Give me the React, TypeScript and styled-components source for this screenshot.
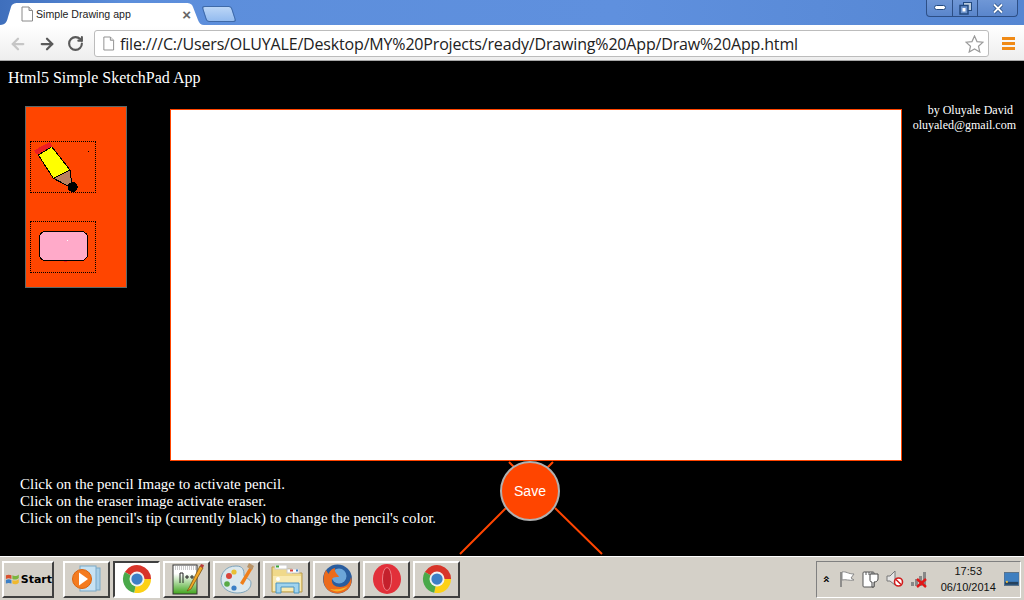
import React from "react";
import styled, { createGlobalStyle } from "styled-components";
import { ArrowLeft, ArrowRight, RotateCw } from "lucide-react";

const GlobalStyle = createGlobalStyle`
  html, body {
    margin: 0;
    padding: 0;
    background: #000;
  }
`;

const ChromeIcon = () => (
  <svg width="30" height="30" viewBox="0 0 32 32">
    <path d="M16 16L3 8.5A15 15 0 0 1 31 16Z" fill="#d8352a" />
    <path d="M16 16L31 16A15 15 0 0 1 13 30.7Z" fill="#fcd116" />
    <path d="M16 16L13 30.7A15 15 0 0 1 3 8.5Z" fill="#4aa94a" />
    <circle cx="16" cy="16" r="8" fill="#f2f2f2" />
    <circle cx="16" cy="16" r="6" fill="#3d7fc6" />
  </svg>
);

const PlayerIcon = () => (
  <svg width="32" height="30" viewBox="0 0 32 30">
    <rect x="14" y="4" width="15" height="22" fill="#a9cfe8" stroke="#7ba9c8" />
    <rect x="9" y="2" width="16" height="25" fill="#c7e2f3" stroke="#7ba9c8" />
    <circle cx="11" cy="15" r="9.5" fill="#f47b20" stroke="#d9640f" />
    <path d="M8 8.5L17 15L8 21.5Z" fill="#fff" />
  </svg>
);

const NotepadIcon = () => (
  <svg width="34" height="34" viewBox="0 0 34 34">
    <defs>
      <linearGradient id="padFill" x1="0" y1="0" x2="0" y2="1">
        <stop offset="0.3" stopColor="#fff" />
        <stop offset="1" stopColor="#3fa51c" />
      </linearGradient>
    </defs>
    <rect x="3" y="3" width="24" height="29" fill="url(#padFill)" stroke="#333" />
    <path d="M3 5H27M3 7H27" stroke="#999" strokeDasharray="1 1" />
    <path d="M10 21V11H13V21M15 15H19M17 13V17M20 15H24M22 13V17" fill="none" stroke="#222" />
    <path d="M30 4L19 26L17 29L21 27L33 6Z" fill="#f3a827" stroke="#7a5312" strokeWidth="0.8" />
    <path d="M30 4L33 6L34 3L31 2Z" fill="#b83a3a" />
  </svg>
);

const PaletteIcon = () => (
  <svg width="34" height="34" viewBox="0 0 34 34">
    <path d="M16 4C6 4 1 11 1 18C1 26 9 31 17 31C26 31 31 27 31 21C31 16 24 17 24 13C24 8 23 4 16 4Z" fill="#dbe8ee" stroke="#7ea4bb" />
    <circle cx="9" cy="14" r="3" fill="#d9453b" />
    <circle cx="7" cy="22" r="2.8" fill="#58a945" />
    <circle cx="14" cy="10" r="2.6" fill="#e9bf35" />
    <circle cx="14" cy="26" r="2.6" fill="#3b7fc6" />
    <path d="M31 3L20 21L23 23L33 6Z" fill="#ef7f1a" />
    <path d="M29 1L34 4L32 8L27 5Z" fill="#b99468" />
  </svg>
);

const FolderIcon = () => (
  <svg width="34" height="32" viewBox="0 0 34 32">
    <path d="M2 4H15L17 6H22V10H32V29H2Z" fill="#f0d98a" stroke="#b89a4c" />
    <rect x="5" y="2" width="12" height="4" fill="#fff" stroke="#ccc" />
    <rect x="6" y="2.5" width="3" height="2" fill="#3aa53a" />
    <rect x="17" y="6" width="12" height="4" fill="#fff" stroke="#ccc" />
    <rect x="20" y="6.5" width="3" height="2" fill="#d9453b" />
    <rect x="26" y="6.5" width="2" height="2" fill="#3b7fc6" />
    <path d="M3 13H31V28H3Z" fill="#f9eab2" />
    <path d="M6 30V20H29V30H24V24H11V30Z" fill="#9fd3ee" stroke="#4b93c0" />
    <circle cx="8" cy="16" r="2" fill="#fff" />
  </svg>
);

const FirefoxIcon = () => (
  <svg width="32" height="32" viewBox="0 0 32 32">
    <circle cx="16.5" cy="16" r="14.5" fill="#2a5d9e" />
    <circle cx="18" cy="13" r="7.5" fill="#6ca6d8" />
    <path d="M5 7C2 12 1 20 6 26C11 32 23 32 28 25C31 21 31 16 30 14C29 21 24 24 19 24C14 24 10 21 11 16C12 14 15 14 18 14C17 11 13 10 14 5C10 6 8 9 8 11C7 10 6 9 5 7Z" fill="#ec6b1c" />
    <path d="M9 26C14 30 23 29 27 23C23 26 14 27 9 26Z" fill="#f7b32b" />
  </svg>
);

const OperaIcon = () => (
  <svg width="30" height="32" viewBox="0 0 30 32">
    <ellipse cx="15" cy="16" rx="14" ry="15" fill="#e2303a" />
    <ellipse cx="15" cy="16" rx="4.5" ry="11.5" fill="#c4202c" stroke="#ee7f86" />
  </svg>
);

const WindowsFlag = () => (
  <svg width="17" height="16" viewBox="0 0 16 16">
    <path d="M1 4C3 3 5 3 7 4V8C5 7 3 7 1 8Z" fill="#d9502e" />
    <path d="M8 4C10 5 13 5 15 3V7C13 9 10 9 8 8Z" fill="#7bb63f" />
    <path d="M1 9C3 8 5 8 7 9V13C5 12 3 12 1 13Z" fill="#3b7fc6" />
    <path d="M8 9C10 10 13 10 15 8V12C13 14 10 14 8 13Z" fill="#f0b92d" />
  </svg>
);

const DocIcon = ({ size }: { size: number }) => (
  <svg width={size} height={size + 2} viewBox="0 0 14 16">
    <path d="M2 1H9L12.5 4.5V15H2Z" fill="#fff" stroke="#8a8a8a" />
    <path d="M9 1V4.5H12.5" fill="#e4e4e4" stroke="#8a8a8a" />
  </svg>
);

const StarIcon = () => (
  <svg width="19" height="18" viewBox="0 0 19 18">
    <path d="M9.5 1L12 6.6L18 7.2L13.5 11.2L14.8 17L9.5 14L4.2 17L5.5 11.2L1 7.2L7 6.6Z" fill="#fff" stroke="#9a9a9a" strokeWidth="1.2" />
  </svg>
);

const PencilTool = () => (
  <svg width="66" height="52" viewBox="0 0 66 52" shapeRendering="crispEdges">
    <path d="M8.3 14L21.7 5.7L40 29L23.3 37.3Z" fill="#ffff00" stroke="#000" />
    <path d="M23.3 37.3L40 29L41.7 42.3L38 45Z" fill="#b9815f" stroke="#000" />
    <path d="M5.5 11.5L21 3" stroke="#ed1c24" strokeWidth="5" />
    <circle cx="42.7" cy="46" r="5" fill="#000" />
    <rect x="58" y="10" width="1" height="1" fill="#000" />
  </svg>
);

const EraserTool = () => (
  <svg width="66" height="52" viewBox="0 0 66 52" shapeRendering="crispEdges">
    <rect x="34" y="39" width="3" height="2" fill="#ed1c24" />
    <rect x="9.5" y="10.5" width="48" height="29" rx="6" fill="#ffaac9" stroke="#000" />
    <rect x="37" y="19" width="1" height="1" fill="#fff" />
  </svg>
);

const TrayFlag = () => (
  <svg width="18" height="18" viewBox="0 0 18 18">
    <path d="M3 2V17" stroke="#777" strokeWidth="1.5" />
    <path d="M4 2C8 1 10 4 16 4L13 8L16 10C11 11 8 9 4 10Z" fill="#fff" stroke="#888" />
  </svg>
);

const TrayPower = () => (
  <svg width="18" height="18" viewBox="0 0 18 18">
    <rect x="1" y="2" width="11" height="15" rx="1" fill="#fff" stroke="#555" />
    <path d="M4 2V5M7 2V5M10 2V5" stroke="#555" />
    <path d="M8 4H16V9C16 11 14 12 12 12V17H10V12C8 12 8 11 8 9Z" fill="#fff" stroke="#444" />
  </svg>
);

const TraySound = () => (
  <svg width="18" height="18" viewBox="0 0 18 18">
    <path d="M1 6H4L9 1V15L4 11H1Z" fill="#e6e6e6" stroke="#777" />
    <circle cx="12.5" cy="12" r="4" fill="#fff" stroke="#d01c1c" strokeWidth="1.6" />
    <path d="M10 9.5L15 14.5" stroke="#d01c1c" strokeWidth="1.6" />
  </svg>
);

const TrayNetwork = () => (
  <svg width="18" height="18" viewBox="0 0 18 18">
    <path d="M1 12H4V16H1ZM5 9H8V16H5ZM9 6H12V16H9ZM13 2H16V16H13Z" fill="#888" />
    <path d="M7 9L16 17M16 9L7 17" stroke="#e01818" strokeWidth="2.4" />
  </svg>
);

const TrayDesktop = () => (
  <svg width="16" height="14" viewBox="0 0 16 14">
    <rect x="0" y="0" width="16" height="14" fill="#3f7fc0" stroke="#596a7a" />
    <rect x="1" y="10" width="14" height="3" fill="#25415c" />
    <rect x="2" y="9" width="2" height="2" fill="#f0c040" />
  </svg>
);

const LaunchIcons = [
  { name: "player", icon: <PlayerIcon /> },
  { name: "chrome", icon: <ChromeIcon />, active: true },
  { name: "notepad", icon: <NotepadIcon /> },
  { name: "paint", icon: <PaletteIcon /> },
  { name: "explorer", icon: <FolderIcon /> },
  { name: "firefox", icon: <FirefoxIcon /> },
  { name: "opera", icon: <OperaIcon /> },
  { name: "chrome2", icon: <ChromeIcon /> },
];

const App = () => {
  return (
    <Screen>
      <GlobalStyle />
      <TabStrip>
        <Tab>
          <DocIcon size={14} />
          <TabTitle>Simple Drawing app</TabTitle>
          <TabClose>×</TabClose>
        </Tab>
        <NewTab />
        <WindowControls>
          <WindowButton>
            <svg width="12" height="6" viewBox="0 0 12 6">
              <rect x="0.5" y="0.5" width="11" height="4" rx="2" fill="#fff" stroke="#234a80" />
            </svg>
          </WindowButton>
          <WindowButton>
            <svg width="13" height="13" viewBox="0 0 13 13">
              <rect x="4.5" y="0.5" width="8" height="8" fill="#bcd" stroke="#234a80" />
              <rect x="1" y="3.5" width="8" height="8.5" fill="#6c93cc" stroke="#234a80" strokeWidth="1.5" />
              <rect x="3.5" y="6" width="3" height="3.5" fill="#fff" />
            </svg>
          </WindowButton>
          <WindowButton $wide>
            <svg width="12" height="11" viewBox="0 0 12 11">
              <path d="M2 1.5L10 9.5M10 1.5L2 9.5" stroke="#234a80" strokeWidth="3.4" />
              <path d="M2 1.5L10 9.5M10 1.5L2 9.5" stroke="#fff" strokeWidth="1.8" />
            </svg>
          </WindowButton>
        </WindowControls>
      </TabStrip>

      <Toolbar>
        <NavIcons>
          <ArrowLeft size={18} strokeWidth={3} color="#c6c6c6" />
          <ArrowRight size={18} strokeWidth={3} color="#5a5a5a" />
          <RotateCw size={17} strokeWidth={3} color="#5a5a5a" />
        </NavIcons>
        <Omnibox>
          <DocIcon size={13} />
          <Address>file:///C:/Users/OLUYALE/Desktop/MY%20Projects/ready/Drawing%20App/Draw%20App.html</Address>
          <StarIcon />
        </Omnibox>
        <MenuIcon>
          <span />
          <span />
          <span />
        </MenuIcon>
      </Toolbar>

      <Page>
        <Heading>Html5 Simple SketchPad App</Heading>
        <Workspace>
          <ToolPanel>
            <ToolBox>
              <PencilTool />
            </ToolBox>
            <ToolBox>
              <EraserTool />
            </ToolBox>
          </ToolPanel>
          <DrawingCanvas />
          <Credit>
            <CreditName>by Oluyale David</CreditName>
            <div>oluyaled@gmail.com</div>
          </Credit>
        </Workspace>
        <Footer>
          <Easel width="160" height="96" viewBox="0 0 160 96">
            <path d="M50 1L56 7M94 1L88 7M47 47L1 93M96 47L143 93" stroke="#ff4500" strokeWidth="2" fill="none" />
          </Easel>
          <Instructions>
            <div>Click on the pencil Image to activate pencil.</div>
            <div>Click on the eraser image activate eraser.</div>
            <div>Click on the pencil's tip (currently black) to change the pencil's color.</div>
          </Instructions>
          <SaveButton>Save</SaveButton>
        </Footer>
      </Page>

      <Taskbar>
        <StartButton>
          <WindowsFlag />
          Start
        </StartButton>
        <Launchers>
          {LaunchIcons.map((item) => (
            <TaskButton key={item.name} $active={item.active}>
              {item.icon}
            </TaskButton>
          ))}
        </Launchers>
        <Tray>
          <TrayChevron>»</TrayChevron>
          <TrayIcons>
            <TrayFlag />
            <TrayPower />
            <TraySound />
            <TrayNetwork />
          </TrayIcons>
          <Clock>
            <div>17:53</div>
            <div>06/10/2014</div>
          </Clock>
          <TrayDesktop />
        </Tray>
      </Taskbar>
    </Screen>
  );
};

const Screen = styled.div`
  width: 1024px;
  height: 600px;
  display: flex;
  flex-direction: column;
  overflow: hidden;
  background: #000;
`;

const TabStrip = styled.div`
  height: 25px;
  flex: none;
  display: flex;
  align-items: flex-end;
  padding-left: 0;
  background: linear-gradient(90deg, #3f6fbc 0%, #5c8edb 12%, #5f90de 60%, #5586d2 100%);
`;

const Tab = styled.div`
  width: 204px;
  height: 22px;
  box-sizing: border-box;
  display: flex;
  align-items: center;
  padding: 0 13px 0 20px;
  background: #fff;
  clip-path: path("M0 22C6 22 7 18 8 14L11 4C12 1 14 0 18 0L186 0C190 0 192 1 193 4L198 17C199 20 201 22 204 22Z");
`;

const TabTitle = styled.span`
  flex: 1;
  margin-left: 2px;
  font: 10.6px "Liberation Sans", Arial, sans-serif;
  color: #222;
`;

const TabClose = styled.span`
  font: bold 15px "Liberation Sans", Arial, sans-serif;
  color: #666;
`;

const NewTab = styled.div`
  width: 30px;
  height: 16px;
  margin: 0 0 3px 0;
  background: linear-gradient(#bcd6f6, #93bbef);
  border: 1px solid #3f6aa8;
  box-sizing: border-box;
  border-radius: 3px;
  transform: skewX(18deg);
`;

const WindowControls = styled.div`
  margin-left: auto;
  margin-right: 6px;
  align-self: flex-start;
  display: flex;
  height: 17px;
  box-sizing: border-box;
  border: 1px solid #2d4f86;
  border-top: none;
  border-radius: 0 0 4px 4px;
  background: linear-gradient(#6f97d6, #5a86cc);
`;

const WindowButton = styled.div<{ $wide?: boolean }>`
  width: ${(p) => (p.$wide ? "40px" : "25px")};
  box-sizing: border-box;
  display: flex;
  align-items: center;
  justify-content: center;
  & + & {
    border-left: 1px solid #2d4f86;
  }
`;

const Toolbar = styled.div`
  height: 36px;
  flex: none;
  box-sizing: border-box;
  display: flex;
  align-items: center;
  padding: 2px 8px 0 9px;
  background: linear-gradient(#ffffff, #eeeeee);
  border-bottom: 1px solid #a8a8a8;
`;

const NavIcons = styled.div`
  width: 85px;
  display: flex;
  align-items: center;
  gap: 11px;
`;

const Omnibox = styled.div`
  width: 895px;
  height: 27px;
  box-sizing: border-box;
  display: flex;
  align-items: center;
  padding: 0 4px 0 7px;
  background: #fff;
  border: 1px solid #bcbcbc;
  border-radius: 3px;
`;

const Address = styled.div`
  flex: 1;
  margin-left: 5px;
  font: 16px "Open Sans", "Liberation Sans", sans-serif;
  letter-spacing: -0.17px;
  color: #222;
  white-space: nowrap;
  overflow: hidden;
`;

const MenuIcon = styled.div`
  display: flex;
  flex-direction: column;
  gap: 2px;
  margin-left: 13px;

  span {
    display: block;
    width: 13px;
    height: 3px;
    background: #f08a16;
  }
`;

const Page = styled.div`
  flex: 1;
  display: flex;
  flex-direction: column;
  background: #000;
  color: #fff;
  font-family: "Liberation Serif", "Times New Roman", serif;
`;

const Heading = styled.div`
  height: 45px;
  box-sizing: border-box;
  padding: 8px 0 0 8px;
  font-size: 16px;
  line-height: 18px;
`;

const Workspace = styled.div`
  display: flex;
  align-items: flex-start;
  padding-left: 25px;
`;

const ToolPanel = styled.div`
  width: 102px;
  height: 182px;
  box-sizing: border-box;
  display: flex;
  flex-direction: column;
  gap: 28px;
  padding: 34px 0 0 4px;
  background: #ff4500;
  border: 1px solid #5c6a6a;
`;

const ToolBox = styled.div`
  width: 66px;
  height: 52px;
  box-sizing: border-box;
  border: 1px dotted #000;
  line-height: 0;

  svg {
    margin: -1px;
  }
`;

const DrawingCanvas = styled.div`
  width: 732px;
  height: 352px;
  box-sizing: border-box;
  margin: 3px 0 0 43px;
  background: #fff;
  border: 1px solid #ff4500;
`;

const Credit = styled.div`
  flex: 1;
  margin-top: -3px;
  padding: 0 8px 0 0;
  text-align: right;
  font-size: 12px;
  line-height: 15px;
`;

const CreditName = styled.div`
  margin-right: 3px;
`;

const Footer = styled.div`
  position: relative;
  flex: 1;
  display: flex;
  padding-left: 20px;
`;

const Easel = styled.svg`
  position: absolute;
  left: 459px;
  top: 0;
`;

const Instructions = styled.div`
  width: 480px;
  padding-top: 15px;
  font-size: 15px;
  line-height: 17px;
`;

const SaveButton = styled.div`
  position: relative;
  width: 60px;
  height: 60px;
  box-sizing: border-box;
  display: flex;
  align-items: center;
  justify-content: center;
  border-radius: 50%;
  border: 2px solid #b0b0b0;
  background: #ff4500;
  color: #fff;
  font: 14px "Liberation Sans", Arial, sans-serif;
`;

const bevel = `
  box-sizing: border-box;
  background: #d4d0c8;
  border-top: 2px solid #fff;
  border-left: 2px solid #fff;
  border-right: 2px solid #404040;
  border-bottom: 2px solid #404040;
`;

const Taskbar = styled.div`
  height: 44px;
  flex: none;
  box-sizing: border-box;
  display: flex;
  align-items: center;
  padding: 3px 3px 2px 2px;
  background: #d4d0c8;
  border-top: 1px solid #fff;
`;

const StartButton = styled.div`
  ${bevel}
  width: 52px;
  height: 37px;
  display: flex;
  align-items: center;
  gap: 1px;
  padding-left: 1px;
  font: bold 11px "DejaVu Sans", Verdana, sans-serif;
  color: #000;
`;

const Launchers = styled.div`
  display: flex;
  gap: 3px;
  margin-left: 9px;
`;

const TaskButton = styled.div<{ $active?: boolean }>`
  ${bevel}
  width: 47px;
  height: 37px;
  display: flex;
  align-items: center;
  justify-content: center;
  ${(p) => p.$active && "background: #fff; border-color: #404040 #fff #fff #404040;"}
`;

const Tray = styled.div`
  margin-left: auto;
  width: 205px;
  height: 37px;
  box-sizing: border-box;
  display: flex;
  align-items: center;
  padding: 0 1px 0 5px;
  border: 1px solid;
  border-color: #808080 #fff #fff #808080;
`;

const TrayChevron = styled.span`
  transform: rotate(-90deg);
  font: bold 12px "DejaVu Sans", sans-serif;
  color: #000;
  width: 8px;
`;

const TrayIcons = styled.div`
  display: flex;
  gap: 6px;
  margin-left: 8px;
`;

const Clock = styled.div`
  width: 62px;
  margin: 0 6px 0 11px;
  text-align: center;
  font: 11px/16px "Liberation Sans", Arial, sans-serif;
  color: #111;
`;

export default App;
